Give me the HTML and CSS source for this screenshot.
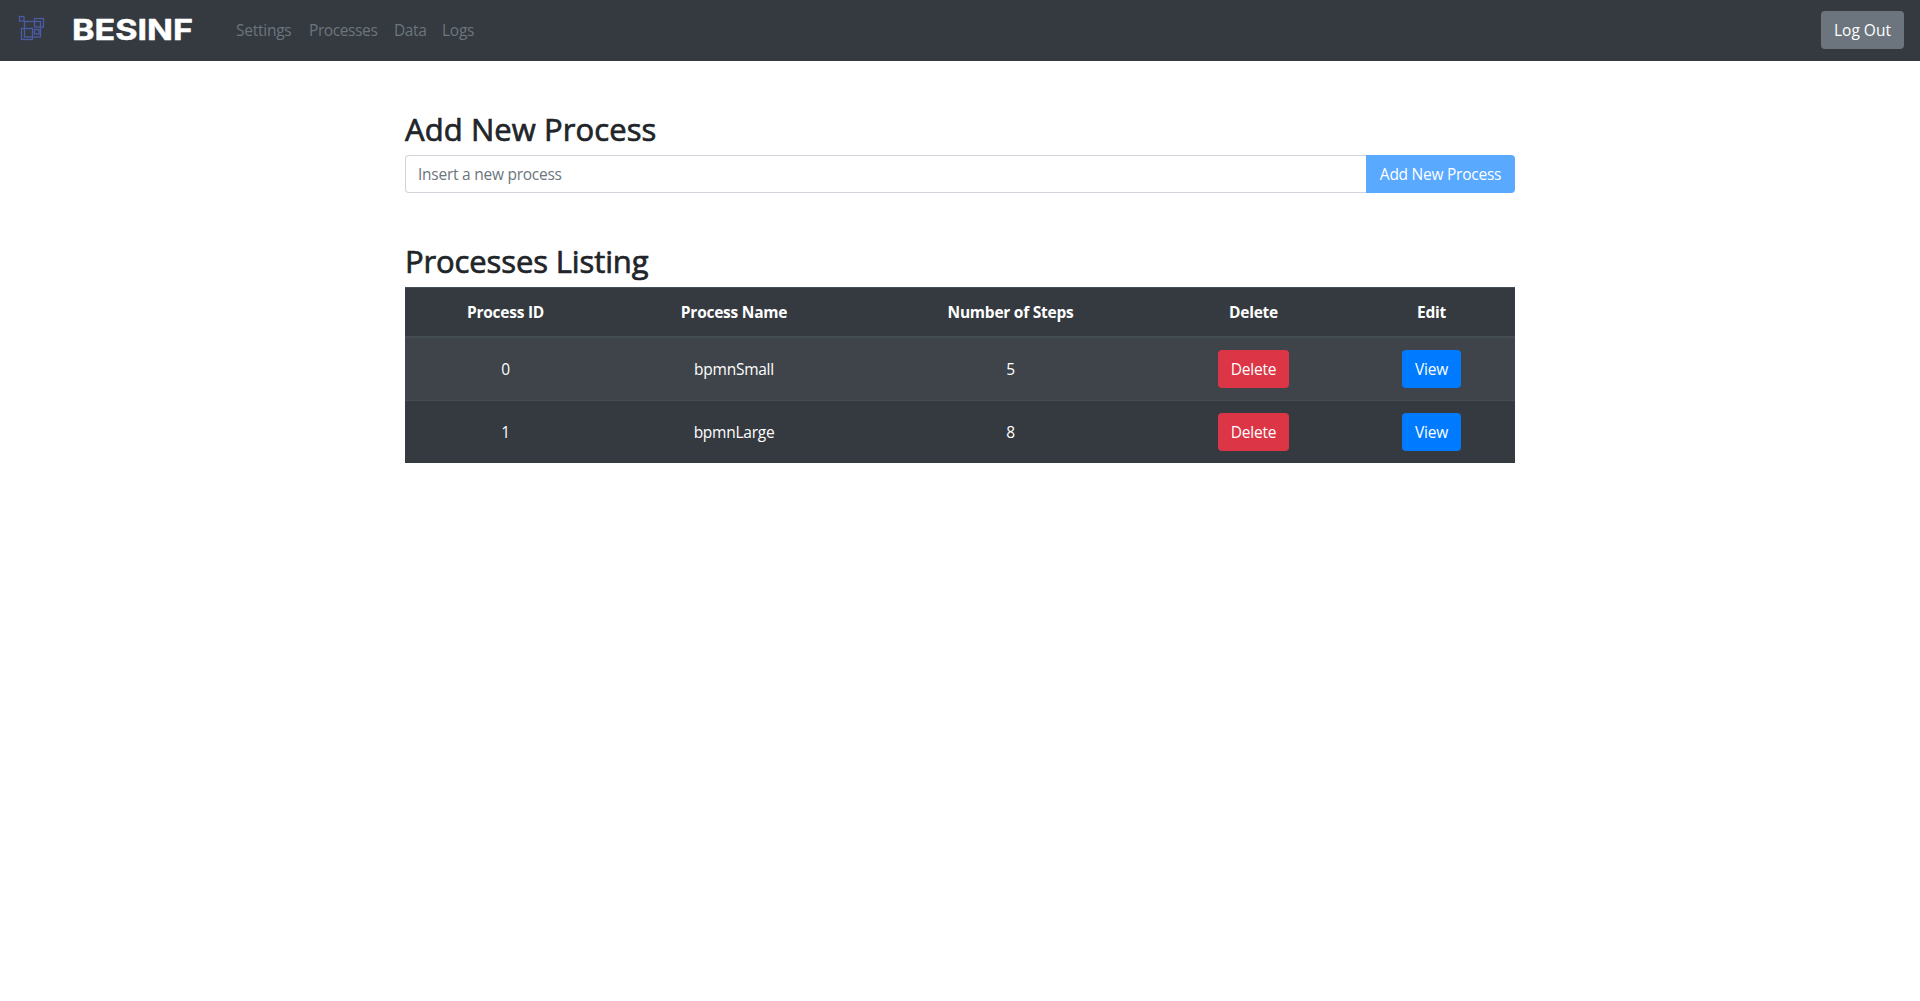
FILE: index.html
```html
<!DOCTYPE html>
<html lang="en">
<head>
<meta charset="utf-8">
<title>BESINF</title>
<link rel="stylesheet" href="styles.css">
</head>
<body>
<nav class="navbar">
  <a class="brand">
    <svg class="brand-icon" width="30" height="28" viewBox="0 0 30 28">
      <rect x="3.5" y="2.5" width="4.5" height="4.5"/>
      <rect x="8.5" y="7.5" width="16" height="15.5"/>
      <rect x="18.5" y="4.5" width="9" height="8.5"/>
      <rect x="5.5" y="14.5" width="11" height="11"/>
      <rect x="18.5" y="15.5" width="4.5" height="4.5"/>
    </svg>
    <svg class="brand-name" width="122" height="28" viewBox="0 0 122 28">
      <text x="0" y="24" textLength="121" lengthAdjust="spacingAndGlyphs">BESINF</text>
    </svg>
  </a>
  <ul class="nav-links">
    <li class="nav-settings">Settings</li>
    <li class="nav-processes">Processes</li>
    <li class="nav-data">Data</li>
    <li class="nav-logs">Logs</li>
  </ul>
  <button class="btn btn-secondary">Log Out</button>
</nav>
<main class="container">
  <h2 class="title-add">Add New Process</h2>
  <form class="input-group">
    <input class="input" type="text" placeholder="Insert a new process">
    <button class="btn btn-add" type="button" disabled>Add New Process</button>
  </form>
  <h2 class="title-list">Processes Listing</h2>
  <table class="table">
    <colgroup><col class="col-id"><col class="col-name"><col class="col-steps"><col class="col-delete"><col class="col-edit"></colgroup>
    <thead>
      <tr><th>Process ID</th><th>Process Name</th><th>Number of Steps</th><th>Delete</th><th>Edit</th></tr>
    </thead>
    <tbody>
      <tr><td>0</td><td>bpmnSmall</td><td>5</td><td><button class="btn btn-danger">Delete</button></td><td><button class="btn btn-primary">View</button></td></tr>
      <tr><td>1</td><td>bpmnLarge</td><td>8</td><td><button class="btn btn-danger">Delete</button></td><td><button class="btn btn-primary">View</button></td></tr>
    </tbody>
  </table>
</main>
</body>
</html>
```
FILE: styles.css
```css
* { box-sizing: border-box; }
body {
  margin: 0;
  background: #fff;
  color: #212529;
  font: 15.5px/24px "Open Sans", "Noto Sans", sans-serif;
  letter-spacing: -0.25px;
}
.navbar {
  display: flex;
  align-items: center;
  height: 61px;
  padding: 0 16px 1px;
  background: #343a40;
}
.brand { display: flex; align-items: center; width: 212px; }
.brand-icon { margin-bottom: 4px; fill: none; stroke: #4c5ba6; stroke-width: 1.3; }
.brand-name { margin: 0 0 1px 26px; overflow: visible; }
.brand-name text {
  font: 700 28.5px Inter, sans-serif;
  letter-spacing: 0;
  fill: #fff;
  stroke: #fff;
  stroke-width: 0.5;
  stroke-linejoin: round;
}
.nav-links {
  display: flex;
  flex: 1;
  margin: 0;
  padding: 0;
  list-style: none;
  color: #6c757d;
}
.nav-links li { padding: 0 8px; white-space: nowrap; }
.nav-settings { width: 73px; }
.nav-processes { width: 85px; letter-spacing: -0.4px; }
.nav-data { width: 48px; letter-spacing: -0.4px; }
.btn {
  height: 38px;
  padding: 0;
  border: 0;
  border-radius: 4px;
  color: #fff;
  font: inherit;
  letter-spacing: inherit;
  text-align: center;
}
.btn-secondary { width: 83px; background: #6c757d; letter-spacing: 0; }
.btn-danger { width: 71px; background: #dc3545; }
.btn-primary { width: 59px; background: #007bff; }
.btn-add { width: 149px; border-radius: 0 4px 4px 0; background: #59a9ff; }
.container { width: 1110px; margin: 0 auto; padding-top: 48px; }
h2 {
  margin: 0 0 8px;
  padding-top: 1px;
  height: 38px;
  font-size: 31px;
  font-weight: 400;
  line-height: 38px;
  letter-spacing: 0.08px;
  -webkit-text-stroke: 0.7px #212529;
}
.title-list { letter-spacing: -0.12px; }
.input-group { display: flex; margin-bottom: 48px; }
.input {
  flex: 1;
  height: 38px;
  padding: 6px 12px;
  border: 1px solid #ced4da;
  border-right: 0;
  border-radius: 4px 0 0 4px;
  font: inherit;
  letter-spacing: inherit;
}
.input::placeholder { color: #6c757d; opacity: 1; }
.table {
  width: 100%;
  table-layout: fixed;
  border-spacing: 0;
  background: #343a40;
  color: #fff;
  text-align: center;
}
.col-id { width: 201px; }
.col-name { width: 256px; }
.col-steps { width: 297px; }
.col-delete { width: 189px; }
.col-edit { width: 167px; }
th {
  height: 51px;
  padding: 0;
  border-top: 1px solid #454d55;
  border-bottom: 2px solid #454d55;
  font-weight: 700;
}
td { height: 62px; padding: 0; vertical-align: middle; }
tbody tr:first-child { background: #3e4449; }
tbody tr + tr td { height: 63px; border-top: 1px solid #454d55; }
```
